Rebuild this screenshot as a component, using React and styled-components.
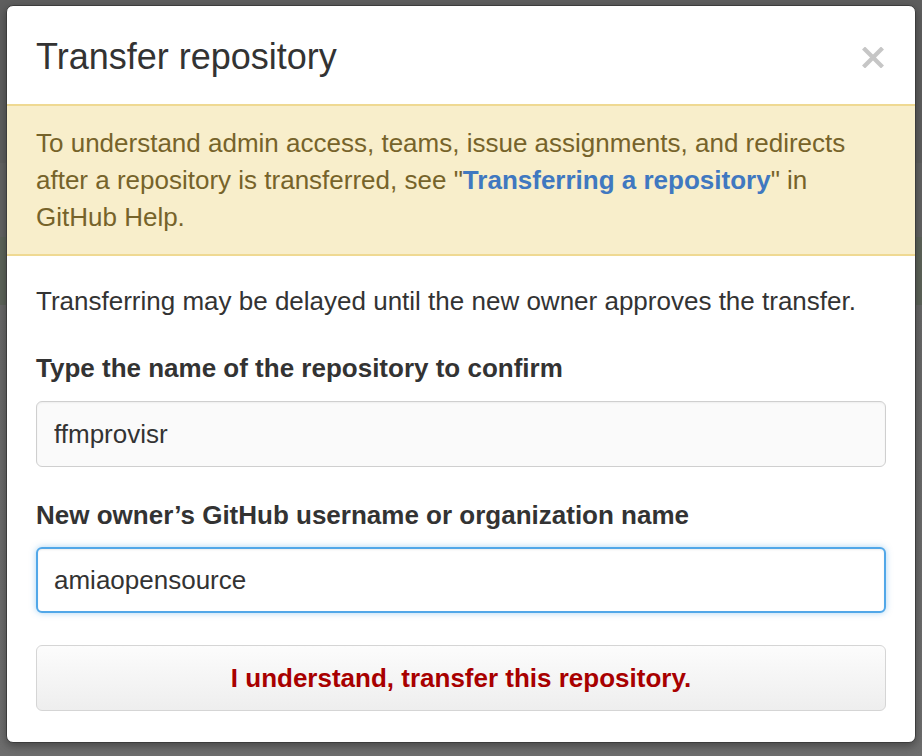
import React, { useState } from "react";
import styled, { createGlobalStyle } from "styled-components";

const GlobalStyle = createGlobalStyle`
  html, body {
    margin: 0;
    padding: 0;
  }
  body {
    min-height: 756px;
    font-family: "Liberation Sans", Arial, Helvetica, sans-serif;
    color: #333;
    background: linear-gradient(
      to bottom,
      #5e5e5e 0,
      #5e5e5e 163px,
      #626262 163px,
      #626262 237px,
      #5c6359 237px,
      #5c6359 305px,
      #676767 305px,
      #6d6d6d 100%
    );
  }
`;

export default function App() {
  const [repoName, setRepoName] = useState("ffmprovisr");
  const [owner, setOwner] = useState("amiaopensource");

  return (
    <Backdrop>
      <GlobalStyle />
      <Modal>
        <Header>
          <Title>Transfer repository</Title>
          <CloseButton aria-label="Close">
            <svg width="22" height="21" viewBox="0 0 22 21">
              <path d="M3 2.5 L19 18.5 M19 2.5 L3 18.5" stroke="#c6c6c6" strokeWidth="4.2" strokeLinecap="square" fill="none" />
            </svg>
          </CloseButton>
        </Header>

        <Flash>
          To understand admin access, teams, issue assignments, and redirects
          after a repository is transferred, see "<FlashLink href="#">Transferring a repository</FlashLink>" in
          GitHub Help.
        </Flash>

        <Body>
          <Note>Transferring may be delayed until the new owner approves the transfer.</Note>

          <Label>Type the name of the repository to confirm</Label>
          <TextInput value={repoName} onChange={(e) => setRepoName(e.target.value)} />

          <Label>New owner’s GitHub username or organization name</Label>
          <TextInput focused value={owner} onChange={(e) => setOwner(e.target.value)} />

          <DangerButton>I understand, transfer this repository.</DangerButton>
        </Body>
      </Modal>
    </Backdrop>
  );
}

const Backdrop = styled.div`
  padding: 5px 6px 14px;
`;

const Modal = styled.div`
  width: 910px;
  box-sizing: border-box;
  background: #fff;
  border: 1px solid #3c3c3c;
  border-radius: 7px;
  box-shadow: 0 3px 8px rgba(0, 0, 0, 0.35);
  overflow: hidden;
`;

const Header = styled.div`
  height: 98px;
  display: flex;
  align-items: center;
  justify-content: space-between;
  padding: 0 31px 0 29px;
`;

const Title = styled.h3`
  margin: 3px 0 0;
  font-size: 36px;
  line-height: 1;
  font-weight: normal;
  color: #333;
`;

const CloseButton = styled.button`
  border: none;
  background: none;
  padding: 0;
  margin-top: 5px;
  cursor: pointer;
  display: flex;
`;

const Flash = styled.div`
  background: #f8eecb;
  border-top: 2px solid #efd992;
  border-bottom: 2px solid #efd992;
  padding: 18.5px 29px;
  font-size: 26px;
  line-height: 37px;
  color: #76632a;
`;

const FlashLink = styled.a`
  color: #4078c0;
  font-weight: bold;
  text-decoration: none;
`;

const Body = styled.div`
  display: flex;
  flex-direction: column;
  padding: 27px 29px 31px;
`;

const Note = styled.p`
  margin: 0;
  font-size: 26px;
  line-height: 37px;
  color: #333;
`;

const Label = styled.label`
  margin-top: 30px;
  font-size: 26px;
  line-height: 37px;
  font-weight: bold;
  color: #333;
`;

const TextInput = styled.input`
  margin-top: ${(p) => (p.focused ? "13px" : "14px")};
  height: 66px;
  box-sizing: border-box;
  font-family: inherit;
  font-size: 26px;
  color: #333;
  border-radius: 6px;
  outline: none;
  border: ${(p) => (p.focused ? "2px solid #51a7e8" : "1px solid #cfcfcf")};
  background: ${(p) => (p.focused ? "#fff" : "#fafafa")};
  box-shadow: ${(p) =>
    p.focused
      ? "inset 0 1px 2px rgba(0,0,0,0.075), 0 0 6px rgba(81,167,232,0.5)"
      : "inset 0 1px 2px rgba(0,0,0,0.05)"};
  padding: 0 17px 0 ${(p) => (p.focused ? "16px" : "17px")};
`;

const DangerButton = styled.button`
  margin-top: 32px;
  height: 66px;
  font-family: inherit;
  font-size: 26px;
  font-weight: bold;
  color: #a80000;
  background: linear-gradient(to bottom, #fcfcfc, #eeeeee);
  border: 1px solid #d5d5d5;
  border-radius: 6px;
  cursor: pointer;
`;
